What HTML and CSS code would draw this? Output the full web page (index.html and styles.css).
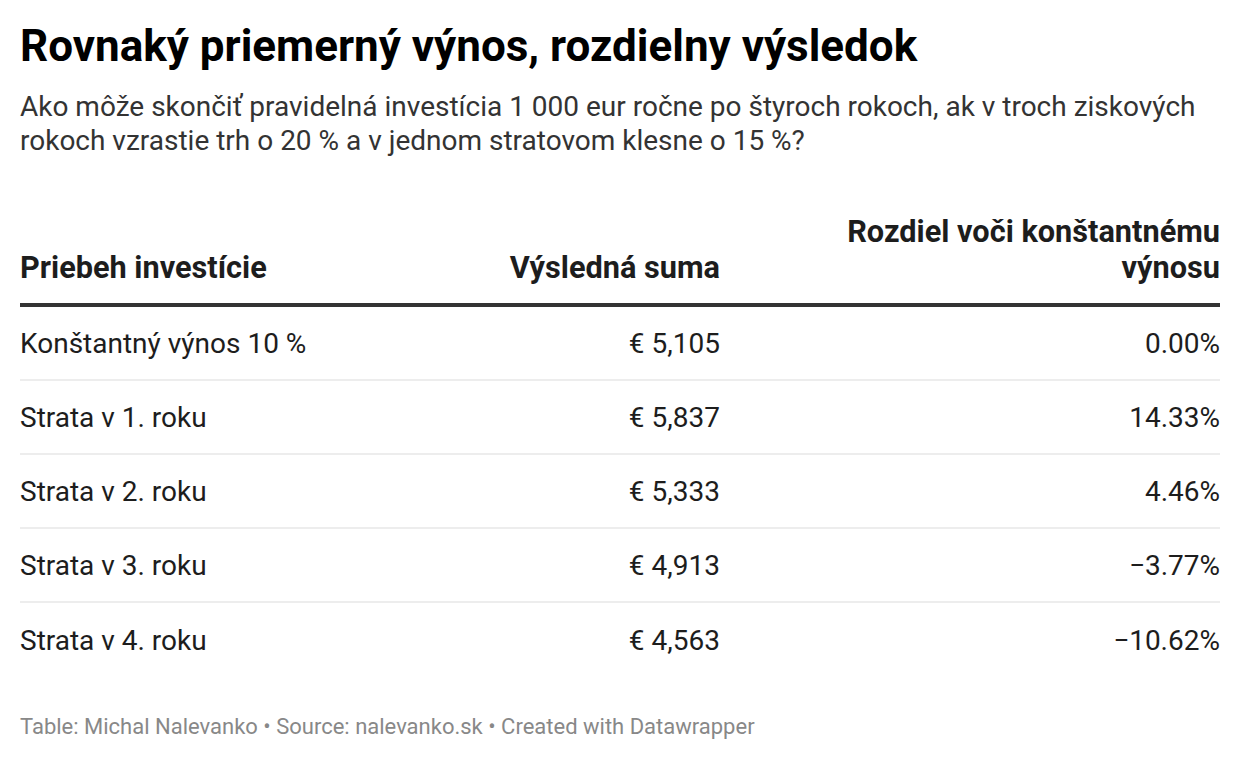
FILE: index.html
```html
<!DOCTYPE html>
<html lang="sk">
<head>
<meta charset="utf-8">
<title>Rovnaký priemerný výnos, rozdielny výsledok</title>
<link rel="stylesheet" href="styles.css">
</head>
<body>
<div class="chart">
  <h1 class="title">Rovnaký priemerný výnos, rozdielny výsledok</h1>
  <p class="subtitle">Ako môže skončiť pravidelná investícia 1 000 eur ročne po štyroch rokoch, ak v troch ziskových rokoch vzrastie trh o 20 % a v jednom stratovom klesne o 15 %?</p>
  <div class="table">
    <div class="row head">
      <div class="cell">Priebeh investície</div>
      <div class="cell num">Výsledná suma</div>
      <div class="cell num wrap">Rozdiel voči konštantnému výnosu</div>
    </div>
    <div class="row">
      <div class="cell">Konštantný výnos 10 %</div>
      <div class="cell num">€ 5,105</div>
      <div class="cell num">0.00%</div>
    </div>
    <div class="row">
      <div class="cell">Strata v 1. roku</div>
      <div class="cell num">€ 5,837</div>
      <div class="cell num">14.33%</div>
    </div>
    <div class="row">
      <div class="cell">Strata v 2. roku</div>
      <div class="cell num">€ 5,333</div>
      <div class="cell num">4.46%</div>
    </div>
    <div class="row">
      <div class="cell">Strata v 3. roku</div>
      <div class="cell num">€ 4,913</div>
      <div class="cell num">−3.77%</div>
    </div>
    <div class="row last">
      <div class="cell">Strata v 4. roku</div>
      <div class="cell num">€ 4,563</div>
      <div class="cell num">−10.62%</div>
    </div>
  </div>
  <p class="footer">Table: Michal Nalevanko • Source: nalevanko.sk • Created with Datawrapper</p>
</div>
</body>
</html>
```

FILE: styles.css
```css
html, body {
  margin: 0;
  padding: 0;
  background: #ffffff;
}
body {
  font-family: Roboto, "Liberation Sans", sans-serif;
  color: #1d1d1d;
}
.chart {
  padding: 20px 20px 0 20px;
}
.title {
  margin: 0;
  font-size: 44px;
  line-height: 52px;
  font-weight: 700;
  color: #000;
}
.subtitle {
  margin: 18px 0 0 0;
  font-size: 28px;
  line-height: 34px;
  font-weight: 400;
  color: #333;
}
.table {
  margin-top: 56px;
}
.row {
  display: grid;
  grid-template-columns: 400px 300px 500px;
  align-items: center;
  height: 74px;
  border-bottom: 2px solid #ededed;
  box-sizing: border-box;
  font-size: 28px;
}
.row.head {
  height: auto;
  align-items: end;
  padding-bottom: 17px;
  border-bottom: 4px solid #333;
  font-weight: 700;
  font-size: 30.7px;
  line-height: 36px;
}
.row.last {
  border-bottom: none;
}
.cell.num {
  text-align: right;
}
.cell.wrap {
  padding-left: 100px;
}
.footer {
  margin: 37px 0 0 0;
  font-size: 22px;
  line-height: 26px;
  color: #888;
}
```
